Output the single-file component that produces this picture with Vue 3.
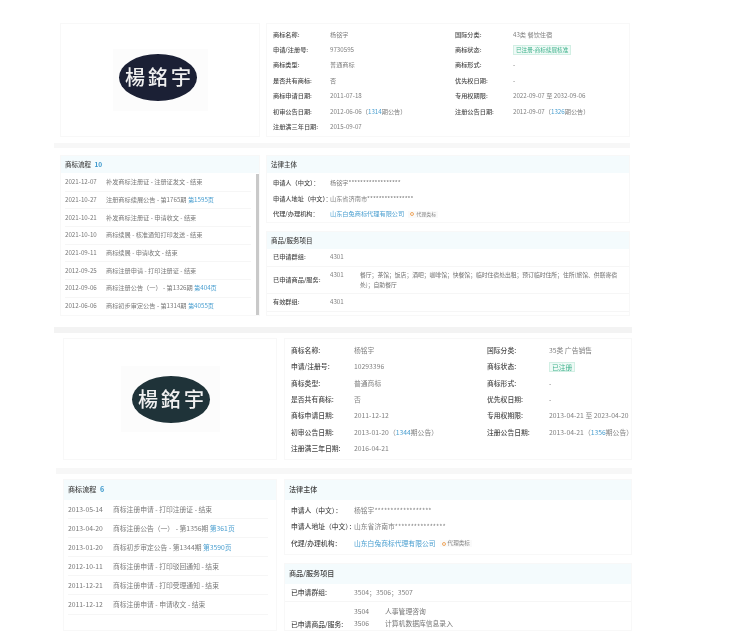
<script setup>
const shots = [
  {
    key: 'a', logoBg: 'navy', count: 10, agentTag: '代理类标',
    info: [
      ['商标名称:', '杨铭宇', '国际分类:', '43类 餐饮住宿'],
      ['申请/注册号:', '9730595', '商标状态:', '', '已注册-商标续展核准'],
      ['商标类型:', '普通商标', '商标形式:', '-'],
      ['是否共有商标:', '否', '优先权日期:', '-'],
      ['商标申请日期:', '2011-07-18', '专用权期限:', '2022-09-07 至 2032-09-06'],
      ['初审公告日期:', ['2012-06-06（', '1314', '期公告）'], '注册公告日期:', ['2012-09-07（', '1326', '期公告）']],
      ['注册满三年日期:', '2015-09-07', '', '']
    ],
    flow: [
      ['2021-12-07', '补发商标注册证 - 注册证发文 - 结束', ''],
      ['2021-10-27', '注册商标续展公告 - 第1765期 ', '第1595页'],
      ['2021-10-21', '补发商标注册证 - 申请收文 - 结束', ''],
      ['2021-10-10', '商标续展 - 核准通知打印发送 - 结束', ''],
      ['2021-09-11', '商标续展 - 申请收文 - 结束', ''],
      ['2012-09-25', '商标注册申请 - 打印注册证 - 结束', ''],
      ['2012-09-06', '商标注册公告（一） - 第1326期 ', '第404页'],
      ['2012-06-06', '商标初步审定公告 - 第1314期 ', '第4055页']
    ],
    owner: '杨铭宇******************',
    addr: '山东省济南市****************',
    goods: [
      { label: '已申请群组:', code: '4301', text: '' },
      { label: '已申请商品/服务:', code: '4301', text: '餐厅；茶馆；饭店；酒吧；咖啡馆；快餐馆；临时住宿处出租；预订临时住所；住所(旅馆、供膳寄宿处)；自助餐厅' },
      { label: '有效群组:', code: '4301', text: '' }
    ]
  },
  {
    key: 'b', logoBg: 'teal', count: 6, agentTag: '代理类标',
    info: [
      ['商标名称:', '杨铭宇', '国际分类:', '35类 广告销售'],
      ['申请/注册号:', '10293396', '商标状态:', '', '已注册'],
      ['商标类型:', '普通商标', '商标形式:', '-'],
      ['是否共有商标:', '否', '优先权日期:', '-'],
      ['商标申请日期:', '2011-12-12', '专用权期限:', '2013-04-21 至 2023-04-20'],
      ['初审公告日期:', ['2013-01-20（', '1344', '期公告）'], '注册公告日期:', ['2013-04-21（', '1356', '期公告）']],
      ['注册满三年日期:', '2016-04-21', '', '']
    ],
    flow: [
      ['2013-05-14', '商标注册申请 - 打印注册证 - 结束', ''],
      ['2013-04-20', '商标注册公告（一） - 第1356期 ', '第361页'],
      ['2013-01-20', '商标初步审定公告 - 第1344期 ', '第3590页'],
      ['2012-10-11', '商标注册申请 - 打印驳回通知 - 结束', ''],
      ['2011-12-21', '商标注册申请 - 打印受理通知 - 结束', ''],
      ['2011-12-12', '商标注册申请 - 申请收文 - 结束', '']
    ],
    owner: '杨铭宇******************',
    addr: '山东省济南市****************',
    goods: [
      { label: '已申请群组:', code: '3504；3506；3507', text: '' },
      { label: '已申请商品/服务:', code: '', text: '', lines: [['3504', '人事管理咨询'], ['3506', '计算机数据库信息录入']] }
    ]
  }
]
</script>

<template>
  <div class="page">
    <template v-for="(s, si) in shots" :key="s.key">
      <section class="shot" :class="'shot-' + s.key">
        <div class="top">
          <div class="card logo-card">
            <div class="logo-box">
              <div class="logo" :class="s.logoBg">楊銘宇</div>
            </div>
          </div>
          <div class="card info">
            <template v-for="(r, i) in s.info" :key="i">
              <span class="lab">{{ r[0] }}</span>
              <span class="val">
                <template v-if="Array.isArray(r[1])">{{ r[1][0] }}<a>{{ r[1][1] }}</a>{{ r[1][2] }}</template>
                <template v-else>{{ r[1] }}</template>
              </span>
              <span class="lab">{{ r[2] }}</span>
              <span class="val">
                <em v-if="r[4]" class="status">{{ r[4] }}</em>
                <template v-else-if="Array.isArray(r[3])">{{ r[3][0] }}<a>{{ r[3][1] }}</a>{{ r[3][2] }}</template>
                <template v-else>{{ r[3] }}</template>
              </span>
            </template>
          </div>
        </div>
        <div class="divider"></div>
        <div class="bottom">
          <div class="card flow">
            <h3 class="head">商标流程 <b>{{ s.count }}</b></h3>
            <ul>
              <li v-for="f in s.flow" :key="f[0]">
                <span class="date">{{ f[0] }}</span>
                <span class="step">{{ f[1] }}<a>{{ f[2] }}</a></span>
              </li>
            </ul>
            <i v-if="s.key === 'a'" class="scroll"></i>
          </div>
          <div class="side">
            <div class="card legal">
              <h3 class="head">法律主体</h3>
              <div class="lrows">
                <span class="lab">申请人（中文）：</span><span class="val">{{ s.owner }}</span>
                <span class="lab">申请人地址（中文）：</span><span class="val">{{ s.addr }}</span>
                <span class="lab">代理/办理机构：</span>
                <span class="val"><a>山东白兔商标代理有限公司</a><em class="tag"><i></i>{{ s.agentTag }}</em></span>
              </div>
            </div>
            <div class="card goods">
              <h3 class="head">商品/服务项目</h3>
              <div v-for="g in s.goods" :key="g.label" class="grow">
                <span class="lab">{{ g.label }}</span>
                <div v-if="g.lines" class="glines">
                  <div v-for="l in g.lines" :key="l[0]"><span>{{ l[0] }}</span><span>{{ l[1] }}</span></div>
                </div>
                <template v-else>
                  <span class="val code">{{ g.code }}</span>
                  <span v-if="g.text" class="val gtext">{{ g.text }}</span>
                </template>
              </div>
            </div>
          </div>
        </div>
      </section>
      <div v-if="si === 0" class="band"></div>
    </template>
  </div>
</template>

<style scoped>
.page {
  width: 749px;
  height: 639px;
  overflow: hidden;
  box-sizing: border-box;
  padding-top: 23px;
  background: #fff;
  font-family: "Noto Sans CJK SC", "Noto Sans", sans-serif;
  color: #777;
  filter: blur(0.35px);
}
.shot { box-sizing: border-box; }
.shot-a { margin-left: 60px; width: 570px; --fs: 6.2px; --gap: 6px; }
.shot-b { margin-left: 63px; width: 569px; --fs: 6.8px; --gap: 7px; }
.shot { font-size: var(--fs); line-height: 1.3; }
.top, .bottom { display: grid; gap: var(--gap); }
.shot-a .top { grid-template-columns: 200px 364px; height: 114px; }
.shot-a .bottom { grid-template-columns: 200px 364px; height: 161px; }
.shot-b .top { grid-template-columns: 214px 348px; height: 122px; }
.shot-b .bottom { grid-template-columns: 214px 348px; height: 152px; overflow: hidden; }
.card { border: 1px solid #f8f8f8; box-sizing: border-box; position: relative; overflow: hidden; }
.logo-card { display: flex; align-items: center; }
.logo-box { background: #fcfcfc; display: flex; align-items: flex-start; box-sizing: border-box; }
.shot-a .logo-box { width: 95px; height: 62px; margin-left: 52px; padding: 5px 0 0 6px; }
.shot-b .logo-box { width: 99px; height: 66px; margin-left: 57px; padding: 10px 0 0 11px; }
.logo {
  width: 78px;
  height: 47px;
  flex: none;
  border-radius: 50%;
  color: #f0f0f0;
  font-size: 20px;
  letter-spacing: 3px;
  text-indent: 3px;
  line-height: 46px;
  text-align: center;
  white-space: nowrap;
  font-weight: 500;
  font-family: "Noto Sans CJK TC", sans-serif;
}
.logo.navy { background: #1b2035; }
.logo.teal { background: #1f3339; }
.info { display: grid; align-items: center; justify-items: start; align-content: start; }
.shot-a .info { grid-template-columns: 57px 125px 58px 1fr; grid-auto-rows: 15.4px; padding: 3px 0 0 6px; }
.shot-b .info { grid-template-columns: 63px 133px 62px 1fr; grid-auto-rows: 16.4px; padding: 3px 0 0 6px; }
.lab { color: #4a4a4a; font-weight: 500; white-space: nowrap; }
.val { color: #808080; white-space: nowrap; }
a { color: #4a9fd0; }
.status {
  font-style: normal;
  color: #3fb28c;
  background: #effaf6;
  border: 1px solid #d2efe4;
  padding: 0 2px;
  line-height: 8px;
  display: inline-block;
}
.shot-a .status { font-size: 5.6px; }
.divider { background: #f7f7f7; }
.shot-a .divider { height: 5px; margin: 6px 0 7px -6px; }
.shot-b .divider { height: 6px; margin: 8px 0 5px -7px; }
.band { height: 6px; background: #f3f3f3; margin: 11px 117px 5px 54px; }
.head {
  margin: 0;
  background: #f4fbfd;
  color: #444;
  font-weight: 500;
  display: flex;
  align-items: center;
  gap: 2px;
  white-space: pre;
  font-size: calc(var(--fs) + 0.3px);
  padding-left: 4px;
}
.shot-a .head { height: 17px; }
.shot-b .head { height: 20px; }
.head b { color: #3a97cc; font-weight: 700; }
.flow ul { margin: 0; padding: 0 4px 0 4px; list-style: none; }
.shot-a .flow ul { padding-top: 1px; }
.flow li { display: flex; align-items: center; border-bottom: 1px solid #f6f6f6; white-space: nowrap; box-sizing: border-box; margin-right: 4px; }
.shot-a .flow li { height: 17.7px; }
.shot-b .flow li { height: 19.1px; }
.shot-a .date { width: 41px; }
.shot-b .date { width: 45px; }
.step { color: #7a7a7a; }
.scroll { position: absolute; right: 0; top: 18px; bottom: 0; width: 3px; background: #c9c9c9; }
.side { display: flex; flex-direction: column; gap: 8px; }
.lrows { display: grid; align-items: center; justify-items: start; padding-left: 6px; }
.shot-a .lrows { grid-template-columns: 57px 1fr; grid-auto-rows: 15.8px; padding-top: 2px; }
.shot-b .lrows { grid-template-columns: 63px 1fr; grid-auto-rows: 16.5px; padding-top: 2px; }
.shot-a .legal { height: 68px; }
.shot-b .legal { height: 76px; }
.tag {
  font-style: normal;
  font-size: calc(var(--fs) - 1.2px);
  margin-left: 4px;
  color: #888;
  background: #fafafa;
  padding: 0 2px;
  display: inline-flex;
  align-items: center;
  gap: 2px;
}
.tag i { width: 4px; height: 4px; border-radius: 50%; border: 1px solid #f0a860; box-sizing: border-box; }
.goods { flex: 1; }
.grow { display: flex; align-items: center; padding-left: 6px; border-bottom: 1px solid #f6f6f6; min-height: 18px; box-sizing: border-box; }
.shot-a .grow .lab { width: 57px; flex: none; }
.shot-b .grow .lab { width: 63px; flex: none; }
.shot-a .grow:nth-of-type(2) { min-height: 27px; }
.shot-a .grow:nth-of-type(2) .code { align-self: flex-start; padding-top: 4px; }
.shot-a .code { width: 30px; flex: none; }
.gtext { white-space: normal; width: 268px; flex: none; line-height: 10px; color: #6f6f6f; font-size: 5.8px; }
.glines { color: #777; line-height: 11.5px; }
.glines div { display: flex; }
.glines span:first-child { width: 31px; }
.shot-b .grow { align-items: flex-start; padding-top: 4px; }
.shot-b .grow:nth-of-type(2) { border-bottom: 0; }
.shot-b .grow:nth-of-type(2) .lab { margin-top: 14px; }
</style>
